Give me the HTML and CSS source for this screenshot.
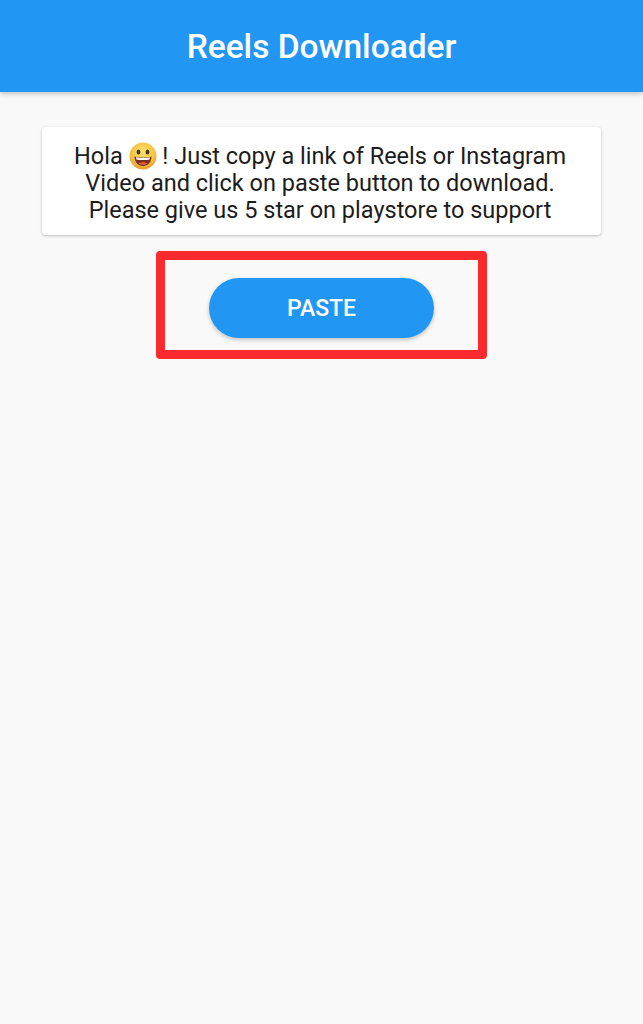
FILE: index.html
```html
<!DOCTYPE html>
<html lang="en">
<head>
  <meta charset="UTF-8" />
  <meta name="viewport" content="width=device-width, initial-scale=1.0"/>
  <title>Reels Downloader</title>
  <link rel="stylesheet" href="styles.css">
</head>
<body>
  <header class="app-bar">
    <h1>Reels Downloader</h1>
  </header>

  <main class="content">
    <div class="card">
      <p>Hola
        <svg class="emoji" viewBox="0 0 28 28" aria-hidden="true">
          <defs>
            <radialGradient id="face" cx="50%" cy="35%" r="65%">
              <stop offset="0" stop-color="#fbe36a"/>
              <stop offset="0.65" stop-color="#f6c343"/>
              <stop offset="1" stop-color="#e59a28"/>
            </radialGradient>
          </defs>
          <circle cx="14" cy="14" r="13.5" fill="url(#face)"/>
          <ellipse cx="9.5" cy="10" rx="1.9" ry="2.6" fill="#4a3320"/>
          <ellipse cx="18.5" cy="10" rx="1.9" ry="2.6" fill="#4a3320"/>
          <path d="M5.5 14.5 C9 16 19 16 22.5 14.5 C22.5 20 19 24 14 24 C9 24 5.5 20 5.5 14.5 Z" fill="#7a2f1c"/>
          <path d="M7 15.2 C10 16.2 18 16.2 21 15.2 L20.6 17.4 C17 18.2 11 18.2 7.4 17.4 Z" fill="#fff"/>
          <path d="M9.5 21.5 C11.5 19.8 16.5 19.8 18.5 21.5 C17 23.3 11 23.3 9.5 21.5 Z" fill="#e8563f"/>
        </svg>
        ! Just copy a link of Reels or Instagram<br>
        Video and click on paste button to download.<br>
        Please give us 5 star on playstore to support</p>
    </div>

    <div class="highlight">
      <button class="paste-button">PASTE</button>
    </div>
  </main>
</body>
</html>
```

FILE: styles.css
```css
* {
  box-sizing: border-box;
}

body {
  margin: 0;
  min-height: 1024px;
  background-color: #f9f9f9;
  font-family: Roboto, "Liberation Sans", sans-serif;
}

.app-bar {
  height: 92px;
  padding-top: 28px;
  background-color: #2196f3;
  box-shadow: 0 2px 5px rgba(0, 0, 0, 0.22);
  text-align: center;
}

.app-bar h1 {
  margin: 0;
  color: white;
  font-size: 33.5px;
  line-height: 38px;
  font-weight: 500;
}

.content {
  display: flex;
  flex-direction: column;
  align-items: center;
  padding-top: 35px;
}

.card {
  width: 559px;
  height: 108px;
  padding: 15px 3px 0 0;
  background-color: white;
  border-radius: 4px;
  box-shadow: 0 1px 3px rgba(0, 0, 0, 0.25);
}

.card p {
  margin: 0;
  color: #1c1c1c;
  font-size: 23.5px;
  line-height: 27px;
  text-align: center;
}

.emoji {
  width: 28px;
  height: 28px;
  vertical-align: -6px;
}

.highlight {
  display: flex;
  justify-content: center;
  align-items: center;
  width: 331px;
  height: 108px;
  margin-top: 16px;
  padding-top: 6px;
  border: 9px solid #fa2a2f;
  border-radius: 4px;
}

.paste-button {
  width: 225px;
  height: 60px;
  padding: 0;
  border: none;
  border-radius: 30px;
  background-color: #2196f3;
  color: white;
  font-family: inherit;
  font-size: 23px;
  font-weight: 500;
  box-shadow: 0 2px 4px rgba(0, 0, 0, 0.22);
}
```
